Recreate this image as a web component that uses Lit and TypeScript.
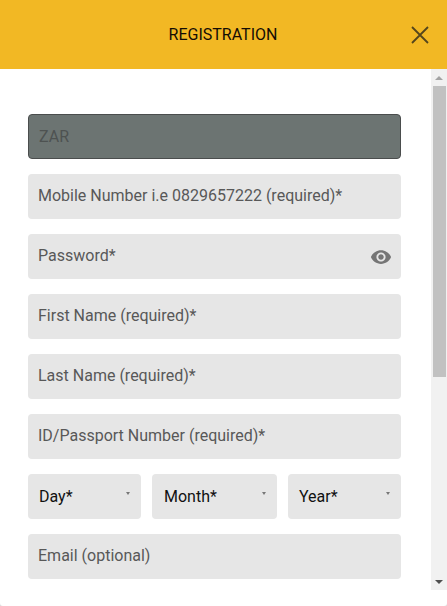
import { LitElement, html, css } from "lit";
import { customElement } from "lit/decorators.js";

@customElement("app-root")
export class AppRoot extends LitElement {
  static styles = css`
    :host { display: block; width: 447px; height: 606px; overflow: hidden; background: #dcdcdc; font-family: Roboto, "Liberation Sans", sans-serif; }
    .dialog { height: 606px; background: #fff; border-radius: 0 0 3px 3px; overflow: hidden; }
    .header { height: 69px; background: #f2b824; display: flex; align-items: center; justify-content: center; position: relative; font-size: 16px; color: #140d04; }
    .title { margin-right: 1px; }
    .close { position: absolute; right: 18px; top: 26px; width: 18px; height: 18px; display: block; }
    .body { display: flex; height: 521px; }
    .content { flex: 1; min-width: 0; overflow: hidden; padding: 45px 30px 0 28px; display: flex; flex-direction: column; gap: 15px; }
    .field { height: 45px; box-sizing: border-box; flex: none; background: #e6e6e6; border-radius: 4px; padding: 0 10px 2px; display: flex; align-items: center; justify-content: space-between; font-size: 16px; color: #585858; }
    .zar { background: #6c7472; border: 1px solid #4a4d4d; color: #4e5251; padding: 0 10px; }
    .row { display: flex; gap: 11px; flex: none; }
    .sel { height: 45px; box-sizing: border-box; background: #e6e6e6; border-radius: 4px; padding: 0 11px; display: flex; align-items: center; justify-content: space-between; font-size: 16px; color: #111; }
    .day { width: 113px; }
    .month { width: 125px; padding-left: 12px; }
    .year { width: 113px; }
    .caret { width: 0; height: 0; border-left: 2px solid transparent; border-right: 2px solid transparent; border-top: 3px solid #777; margin-top: -6px; }
    .bar { width: 16px; background: #f1f1f1; display: flex; flex-direction: column; align-items: center; }
    .btn { height: 17px; flex: none; display: flex; align-items: center; justify-content: center; }
    .thumb { width: 13px; height: 291px; margin-left: 1px; background: #c1c1c1; flex: none; }
    .spacer { flex: 1; }
    .up { width: 0; height: 0; border-left: 4px solid transparent; border-right: 4px solid transparent; border-bottom: 4px solid #a3a3a3; }
    .down { width: 0; height: 0; border-left: 4px solid transparent; border-right: 4px solid transparent; border-top: 4px solid #505050; }
    .eye { width: 22px; height: 22px; display: block; margin: 2px -1px 0 0; }
  `;

  render() {
    return html`
      <div class="dialog">
        <div class="header">
          <span class="title">REGISTRATION</span>
          <svg class="close" viewBox="0 0 18 18" fill="none" stroke="#54451c" stroke-width="1.8"><path d="M1 1 L17 17 M17 1 L1 17"/></svg>
        </div>
        <div class="body">
          <div class="content">
            <div class="field zar">ZAR</div>
            <div class="field">Mobile Number i.e 0829657222 (required)*</div>
            <div class="field">Password*
              <svg class="eye" viewBox="0 0 24 24" fill="#757575"><path d="M12 4.5C7 4.5 2.73 7.61 1 12c1.73 4.39 6 7.5 11 7.5s9.27-3.11 11-7.5c-1.73-4.39-6-7.5-11-7.5zM12 17c-2.76 0-5-2.24-5-5s2.24-5 5-5 5 2.24 5 5-2.24 5-5 5zm0-8c-1.66 0-3 1.34-3 3s1.34 3 3 3 3-1.34 3-3-1.34-3-3-3z"/></svg>
            </div>
            <div class="field">First Name (required)*</div>
            <div class="field">Last Name (required)*</div>
            <div class="field">ID/Passport Number (required)*</div>
            <div class="row">
              <div class="sel day">Day*<span class="caret"></span></div>
              <div class="sel month">Month*<span class="caret"></span></div>
              <div class="sel year">Year*<span class="caret"></span></div>
            </div>
            <div class="field">Email (optional)</div>
          </div>
          <div class="bar">
            <div class="btn"><span class="up"></span></div>
            <div class="thumb"></div>
            <div class="spacer"></div>
            <div class="btn"><span class="down"></span></div>
          </div>
        </div>
      </div>
    `;
  }
}
